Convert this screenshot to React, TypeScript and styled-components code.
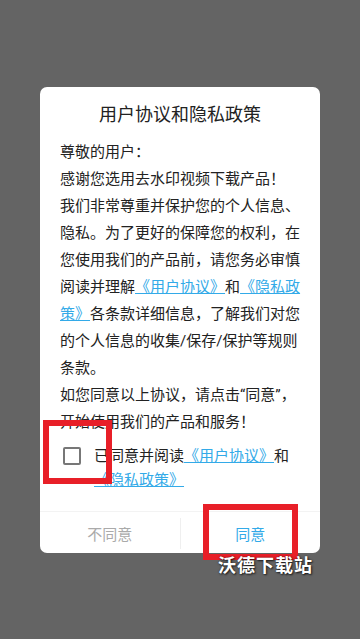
import React, { useState } from "react";
import styled, { createGlobalStyle } from "styled-components";

const GlobalStyle = createGlobalStyle`
  html, body {
    margin: 0;
    padding: 0;
    background: #646464;
  }
  * {
    box-sizing: border-box;
  }
`;

const Screen = styled.div`
  position: relative;
  width: 360px;
  height: 639px;
  display: flex;
  align-items: center;
  justify-content: center;
  background: #646464;
  font-family: Roboto, "Noto Sans CJK SC", sans-serif;
  overflow: hidden;
`;

const Dialog = styled.div`
  width: 280px;
  background: #ffffff;
  border-radius: 7px;
  display: flex;
  flex-direction: column;
  padding-top: 16px;
`;

const Title = styled.h2`
  margin: 0 0 12px;
  font-size: 18px;
  line-height: 24px;
  font-weight: 400;
  color: #222;
  text-align: center;
`;

const Body = styled.div`
  padding: 0 16px 0 20px;
  font-size: 15px;
  line-height: 27px;
  color: #222;
`;

const Para = styled.p`
  margin: 0;
`;

const Link = styled.a`
  color: #33aae8;
  text-decoration: underline;
  text-decoration-thickness: 1px;
  cursor: pointer;
`;

const AgreeRow = styled.label`
  display: flex;
  align-items: flex-start;
  gap: 13px;
  padding: 0 16px 0 23px;
  margin-top: 8px;
  font-size: 15px;
  line-height: 24px;
  color: #222;
  cursor: pointer;
`;

const Box = styled.span<{ $checked: boolean }>`
  flex: none;
  width: 18px;
  height: 18px;
  margin-top: 3px;
  border: 2px solid ${(p) => (p.$checked ? "#33aae8" : "#777")};
  background: ${(p) => (p.$checked ? "#33aae8" : "transparent")};
  border-radius: 2px;
`;

const AgreeText = styled.span`
  flex: 1;
`;

const Actions = styled.div`
  margin-top: 19px;
  height: 42px;
  display: flex;
  align-items: stretch;
  border-top: 1px solid #f3f3f3;
`;

const ActionButton = styled.button<{ $primary?: boolean }>`
  flex: 1;
  border: none;
  background: transparent;
  padding: 3px 0 0;
  font-family: inherit;
  font-size: 15px;
  color: ${(p) => (p.$primary ? "#33aae8" : "#aaaaaa")};
  cursor: pointer;
`;

const VDivider = styled.div`
  width: 1px;
  margin: 6px 0 4px;
  background: #efefef;
`;

const Mark = styled.div<{ $x: number; $y: number; $w: number; $h: number }>`
  position: absolute;
  left: ${(p) => p.$x}px;
  top: ${(p) => p.$y}px;
  width: ${(p) => p.$w}px;
  height: ${(p) => p.$h}px;
  border: 6px solid #e81f28;
  pointer-events: none;
`;

const Watermark = styled.div`
  position: absolute;
  left: 218px;
  top: 556px;
  font-size: 18px;
  line-height: 19px;
  font-weight: 700;
  letter-spacing: 1px;
  color: #ffffff;
  text-shadow: 1px 1px 2px rgba(0, 0, 0, 0.7), 0 0 2px rgba(0, 0, 0, 0.5);
  pointer-events: none;
`;

export default function App() {
  const [checked, setChecked] = useState(false);

  return (
    <>
      <GlobalStyle />
      <Screen>
        <Dialog>
          <Title>用户协议和隐私政策</Title>
          <Body>
            <Para>尊敬的用户：</Para>
            <Para>感谢您选用去水印视频下载产品！</Para>
            <Para>
              我们非常尊重并保护您的个人信息、隐私。为了更好的保障您的权利，在您使用我们的产品前，请您务必审慎阅读并理解
              <Link>《用户协议》</Link>和<Link>《隐私政策》</Link>
              各条款详细信息，了解我们对您的个人信息的收集/保存/保护等规则条款。
            </Para>
            <Para>如您同意以上协议，请点击“同意”，开始使用我们的产品和服务！</Para>
          </Body>
          <AgreeRow onClick={() => setChecked(!checked)}>
            <Box $checked={checked} />
            <AgreeText>
              已同意并阅读<Link>《用户协议》</Link>和<Link>《隐私政策》</Link>
            </AgreeText>
          </AgreeRow>
          <Actions>
            <ActionButton>不同意</ActionButton>
            <VDivider />
            <ActionButton $primary>同意</ActionButton>
          </Actions>
        </Dialog>
        <Mark $x={43} $y={420} $w={69} $h={64} />
        <Mark $x={203} $y={504} $w={95} $h={56} />
        <Watermark>沃德下载站</Watermark>
      </Screen>
    </>
  );
}
